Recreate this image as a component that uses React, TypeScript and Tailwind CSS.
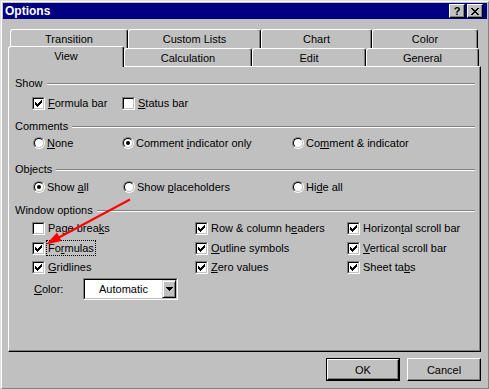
// Excel "Options" dialog (View tab), Windows 98 look
import type { ReactNode } from "react";

// ── small pixel glyphs ─────────────────────────────
const CheckMark = () => (
  <svg width="7" height="7" viewBox="0 0 7 7" shapeRendering="crispEdges">
    <path d="M0 2h1v3H0zM1 3h1v3H1zM2 4h1v3H2zM3 3h1v3H3zM4 2h1v3H4zM5 1h1v3H5zM6 0h1v3H6z" fill="#000" />
  </svg>
);

const CloseGlyph = () => (
  <svg width="8" height="7" viewBox="0 0 8 7" shapeRendering="crispEdges">
    <path d="M0 0h2v1h1v1h2V1h1V0h2v1H7v1H6v1H5v1h1v1h1v1h1v1H6V6H5V5H3v1H2v1H0V6h1V5h1V4h1V3H2V2H1V1H0z" fill="#000" />
  </svg>
);

const DownArrow = () => (
  <svg width="7" height="4" viewBox="0 0 7 4" shapeRendering="crispEdges">
    <path d="M0 0h7v1H6v1H5v1H4v1H3V3H2V2H1V1H0z" fill="#000" />
  </svg>
);

// ── controls ───────────────────────────────────────
function CheckBox({ checked, focused, children }: { checked?: boolean; focused?: boolean; children: ReactNode }) {
  return (
    <div className="flex items-center">
      <div className="w-[13px] h-[13px] shrink-0 border border-t-[#808080] border-l-[#808080] border-b-white border-r-white">
        <div className="w-full h-full border border-t-black border-l-black border-b-[#c0c0c0] border-r-[#c0c0c0] bg-white flex items-center justify-center">
          {checked && <CheckMark />}
        </div>
      </div>
      <span
        className={
          focused
            ? "ml-[1px] px-[1px] border border-dotted border-black leading-[14px] whitespace-nowrap"
            : "ml-[1px] px-[1px] border border-transparent leading-[14px] whitespace-nowrap"
        }
      >
        {children}
      </span>
    </div>
  );
}

function Radio({ checked, children }: { checked?: boolean; children: ReactNode }) {
  return (
    <div className="flex items-center">
      <div className="w-[12px] h-[12px] shrink-0 rounded-full border border-t-[#808080] border-l-[#808080] border-b-white border-r-white">
        <div className="w-full h-full rounded-full border border-t-black border-l-black border-b-[#c0c0c0] border-r-[#c0c0c0] bg-white flex items-center justify-center">
          {checked && <div className="w-[4px] h-[4px] rounded-full bg-black" />}
        </div>
      </div>
      <span className="px-[1px] border border-transparent leading-[14px] whitespace-nowrap">{children}</span>
    </div>
  );
}

function Section({ title, className }: { title: string; className: string }) {
  return (
    <div className={className}>
      <div className="h-[14px] flex items-center pl-[6px] pr-[5px]">
        <span className="leading-[14px] whitespace-nowrap">{title}</span>
        <div className="flex-1 ml-[4px] mt-[2px] h-[2px] border-t border-t-[#808080] border-b border-b-white" />
      </div>
    </div>
  );
}

const U = ({ children }: { children: ReactNode }) => <u className="underline">{children}</u>;

export default function App() {
  return (
    <div className="relative w-[489px] h-[389px] overflow-hidden font-['Liberation_Sans',Arial,sans-serif] text-[11px] text-black">
      <div className="w-[490px] h-[390px] bg-[#c0c0c0] border border-t-[#dfdfdf] border-l-[#dfdfdf] border-b-black border-r-black">
        <div className="w-full h-full border border-t-white border-l-white border-b-[#808080] border-r-[#808080] p-[1px] flex flex-col">
          {/* ── TITLE BAR ─────────────────────────── */}
          <div className="h-[16px] bg-[#000080] flex items-center pl-[2px] pr-[4px]">
            <span className="text-white font-bold text-[12px] leading-[16px] flex-1">Options</span>
            <div className="w-[16px] h-[14px] bg-[#c0c0c0] border border-t-white border-l-white border-b-black border-r-black shadow-[inset_-1px_-1px_0_#808080] flex items-center justify-center font-bold text-[11px] leading-[11px]">
              ?
            </div>
            <div className="ml-[2px] w-[16px] h-[14px] bg-[#c0c0c0] border border-t-white border-l-white border-b-black border-r-black shadow-[inset_-1px_-1px_0_#808080] flex items-center justify-center">
              <CloseGlyph />
            </div>
          </div>

          {/* ── TABS (back row) ───────────────────── */}
          <div className="mt-[10px] ml-[7px] flex h-[19px]">
            <div className="w-[118px] h-[19px] border-t border-l border-r border-t-white border-l-white border-r-black rounded-t-[3px] shadow-[inset_-1px_0_0_#808080] flex justify-center pt-[3px] leading-[13px]">Transition</div>
            <div className="w-[133px] h-[19px] border-t border-l border-r border-t-white border-l-white border-r-black rounded-t-[3px] shadow-[inset_-1px_0_0_#808080] flex justify-center pt-[3px] leading-[13px]">Custom Lists</div>
            <div className="w-[111px] h-[19px] border-t border-l border-r border-t-white border-l-white border-r-black rounded-t-[3px] shadow-[inset_-1px_0_0_#808080] flex justify-center pt-[3px] leading-[13px]">Chart</div>
            <div className="w-[106px] h-[19px] border-t border-l border-r border-t-white border-l-white border-r-black rounded-t-[3px] shadow-[inset_-1px_0_0_#808080] flex justify-center pt-[3px] leading-[13px]">Color</div>
          </div>

          {/* ── TABS (front row, View selected) ───── */}
          <div className="ml-[5px] flex items-start h-[18px]">
            <div className="relative z-10 -mt-[2px] w-[116px] h-[21px] bg-[#c0c0c0] border-t border-l border-r border-t-white border-l-white border-r-black rounded-t-[3px] shadow-[inset_-1px_0_0_#808080] flex justify-center pt-[3px] leading-[13px]">View</div>
            <div className="w-[128px] h-[18px] border-t border-l border-r border-t-white border-l-white border-r-black rounded-t-[3px] shadow-[inset_-1px_0_0_#808080] flex justify-center pt-[3px] leading-[13px]">Calculation</div>
            <div className="w-[114px] h-[18px] border-t border-l border-r border-t-white border-l-white border-r-black rounded-t-[3px] shadow-[inset_-1px_0_0_#808080] flex justify-center pt-[3px] leading-[13px]">Edit</div>
            <div className="w-[113px] h-[18px] border-t border-l border-r border-t-white border-l-white border-r-black rounded-t-[3px] shadow-[inset_-1px_0_0_#808080] flex justify-center pt-[3px] leading-[13px]">General</div>
          </div>

          {/* ── PANEL ─────────────────────────────── */}
          <div className="relative z-0 ml-[5px] w-[473px] h-[286px] border border-t-white border-l-white border-r-black border-b-black shadow-[inset_-1px_-1px_0_#808080] flex flex-col">
            <Section title="Show" className="mt-[9px]" />
            <div className="mt-[6px] h-[14px] flex items-center pl-[23px]">
              <div className="w-[90px]">
                <CheckBox checked><U>F</U>ormula bar</CheckBox>
              </div>
              <CheckBox><U>S</U>tatus bar</CheckBox>
            </div>

            <Section title="Comments" className="mt-[9px]" />
            <div className="mt-[3px] h-[14px] flex items-center pl-[24px]">
              <div className="w-[89px]">
                <Radio><U>N</U>one</Radio>
              </div>
              <div className="w-[170px]">
                <Radio checked>Comment <U>i</U>ndicator only</Radio>
              </div>
              <Radio>Co<U>m</U>ment &amp; indicator</Radio>
            </div>

            <Section title="Objects" className="mt-[12px]" />
            <div className="mt-[4px] h-[14px] flex items-center pl-[24px]">
              <div className="w-[90px]">
                <Radio checked>Show <U>a</U>ll</Radio>
              </div>
              <div className="w-[169px]">
                <Radio>Show <U>p</U>laceholders</Radio>
              </div>
              <Radio>Hi<U>d</U>e all</Radio>
            </div>

            <Section title="Window options" className="mt-[9px]" />
            <div className="mt-[4px] h-[14px] flex items-center pl-[23px]">
              <div className="w-[163px]"><CheckBox>Page brea<U>k</U>s</CheckBox></div>
              <div className="w-[152px]"><CheckBox checked>Row &amp; column h<U>e</U>aders</CheckBox></div>
              <CheckBox checked>Horizon<U>t</U>al scroll bar</CheckBox>
            </div>
            <div className="mt-[6px] h-[14px] flex items-center pl-[23px]">
              <div className="w-[163px]"><CheckBox checked focused>Fo<U>r</U>mulas</CheckBox></div>
              <div className="w-[152px]"><CheckBox checked><U>O</U>utline symbols</CheckBox></div>
              <CheckBox checked><U>V</U>ertical scroll bar</CheckBox>
            </div>
            <div className="mt-[5px] h-[14px] flex items-center pl-[23px]">
              <div className="w-[163px]"><CheckBox checked><U>G</U>ridlines</CheckBox></div>
              <div className="w-[152px]"><CheckBox checked><U>Z</U>ero values</CheckBox></div>
              <CheckBox checked>Sheet ta<U>b</U>s</CheckBox>
            </div>

            {/* colour combo */}
            <div className="mt-[4px] h-[22px] flex items-center pl-[25px]">
              <span className="w-[49px] leading-[14px]"><U>C</U>olor:</span>
              <div className="w-[95px] h-[22px] border border-t-[#808080] border-l-[#808080] border-b-white border-r-white">
                <div className="w-full h-full border border-t-black border-l-black border-b-[#c0c0c0] border-r-[#c0c0c0] bg-white flex">
                  <div className="flex-1 flex items-center justify-center leading-[14px]">Automatic</div>
                  <div className="w-[14px] h-full bg-[#c0c0c0] border border-t-[#dfdfdf] border-l-[#dfdfdf] border-b-black border-r-black shadow-[inset_1px_1px_0_white,inset_-1px_-1px_0_#808080] flex items-center justify-center">
                    <DownArrow />
                  </div>
                </div>
              </div>
            </div>
          </div>

          {/* ── OK / CANCEL ───────────────────────── */}
          <div className="mt-[6px] flex justify-end gap-[7px] pr-[6px]">
            <div className="w-[74px] h-[23px] border border-black">
              <div className="w-full h-full border border-t-white border-l-white border-b-black border-r-black shadow-[inset_-1px_-1px_0_#808080] flex items-center justify-center leading-[14px]">
                OK
              </div>
            </div>
            <div className="w-[74px] h-[23px] border border-t-white border-l-white border-b-black border-r-black shadow-[inset_-1px_-1px_0_#808080] flex items-center justify-center leading-[14px]">
              Cancel
            </div>
          </div>
        </div>
      </div>

      {/* ── red annotation arrow (drawn over the dialog) ── */}
      <svg className="absolute left-0 top-0 pointer-events-none" width="489" height="389" viewBox="0 0 489 389">
        <line x1="130" y1="199.5" x2="57" y2="238.5" stroke="#ff0000" strokeWidth="2" />
        <polygon points="46,244.5 57,232.5 61.5,241" fill="#ff0000" />
      </svg>
    </div>
  );
}
